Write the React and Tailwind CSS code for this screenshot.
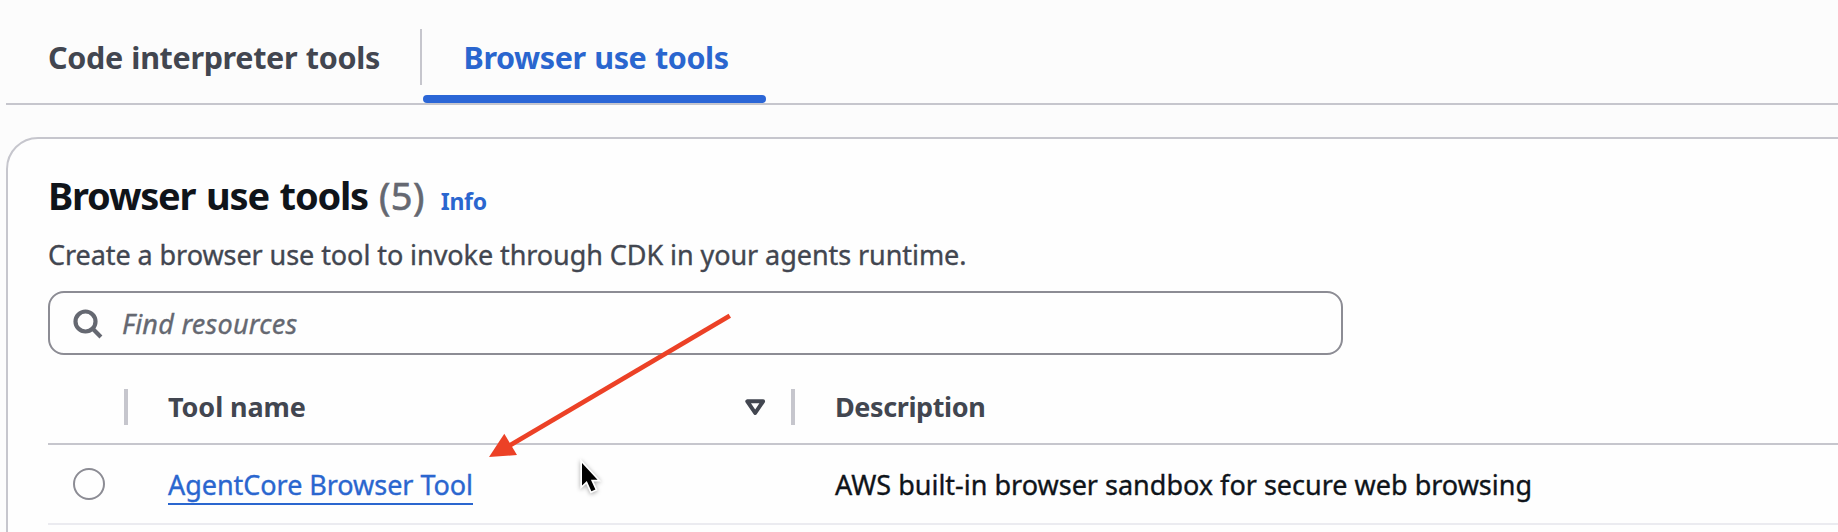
function SearchIcon() {
  return (
    <svg viewBox="0 0 30 30" className="mt-px h-[30px] w-[30px]" fill="none" stroke="#656871" strokeWidth="4.2">
      <circle cx="12.5" cy="12.5" r="10" />
      <path d="M19.5 19.5l8.4 8.4" />
    </svg>
  );
}

function SortIcon() {
  return (
    <svg viewBox="0 0 21 17" className="h-[17px] w-[21px]" fill="none" stroke="#424650" strokeWidth="4" strokeLinejoin="round">
      <path d="M2.3 2.3h15.8L10.2 14z" />
    </svg>
  );
}

function Annotations() {
  return (
    <svg viewBox="0 0 1838 532" className="pointer-events-none absolute left-0 top-0 h-[532px] w-[1838px]">
      <path d="M729.8 315.8L508 446.5" stroke="#ec4126" strokeWidth="4.8" />
      <path d="M489 457l15.3-23.2L517 455z" fill="#ec4126" />
      <g className="[filter:drop-shadow(0_1px_2px_rgba(0,0,0,0.35))]">
        <path d="M582 463v22.5l4.8-4.4 4.6 10.2 4-1.8-4.5-9.8h6.6z" fill="#000" stroke="#fff" strokeWidth="3.4" />
        <path d="M582 463v22.5l4.8-4.4 4.6 10.2 4-1.8-4.5-9.8h6.6z" fill="#000" />
      </g>
    </svg>
  );
}

export default function App() {
  return (
    <div className="relative h-[532px] w-[1838px] overflow-hidden bg-[#fcfcfc] pl-[6px] font-['Noto_Sans','Open_Sans',sans-serif] text-[27px] text-[#0f141a]">
      <nav className="flex h-[105px] border-b-2 border-[#c6c6cd] pt-[11px] text-[30.5px] font-bold">
        <div className="flex h-[92px] items-center whitespace-nowrap pl-[42px] text-[#424650]">
          <span className="w-[372px] pt-[2px] tracking-[-0.34px] [word-spacing:1px]">Code interpreter tools</span>
          <span className="h-14 w-[2px] bg-[#c6c6cd]" />
        </div>
        <div className="ml-px flex h-[92px] w-[343px] flex-col text-[#2a66cf]">
          <span className="flex h-[84px] items-center whitespace-nowrap pl-[40.5px] pt-[10px] tracking-[-0.4px] [word-spacing:1px]">Browser use tools</span>
          <span className="h-2 rounded bg-[#2b66d6]" />
        </div>
      </nav>

      <section className="mt-8 h-[440px] w-[1880px] rounded-tl-[32px] border-2 border-[#c6c6cd] bg-[#fefefe] pl-[40px] pt-[31px]">
        <header className="flex h-[50px] items-baseline whitespace-nowrap leading-[50px]">
          <h2 className="text-[38px] font-bold tracking-[-1.2px] [word-spacing:2px]">Browser use tools</h2>
          <span className="ml-[11px] text-[38px] tracking-[0.4px] text-[#656871] [-webkit-text-stroke:0.6px_#656871]">(5)</span>
          <a className="ml-[16px] text-[23px] font-bold tracking-[-0.3px] text-[#2a66cf]">Info</a>
        </header>
        <p className="mt-[17px] h-9 whitespace-nowrap leading-9 tracking-[-0.07px] text-[#424650] [-webkit-text-stroke:0.35px_#424650]">
          Create a browser use tool to invoke through CDK in your agents runtime.
        </p>
        <div className="mt-[18px] flex h-16 w-[1295px] items-center rounded-[16px] border-2 border-[#8c8c94] pl-[23px]">
          <SearchIcon />
          <span className="ml-[19px] pt-[2px] italic tracking-[0.25px] text-[#656871] [-webkit-text-stroke:0.35px_#656871]">Find resources</span>
        </div>

        <div className="flex h-[90px] items-center border-b-2 border-[#c6c6cd] pt-[16px] font-bold text-[#424650]">
          <span className="ml-[75.5px] h-9 w-1 bg-[#c6c6cd]" />
          <span className="ml-[40.5px] w-[577px] tracking-[-0.1px]">Tool name</span>
          <SortIcon />
          <span className="ml-[25px] h-9 w-1 bg-[#c6c6cd]" />
          <span className="ml-[40px] tracking-[-0.4px]">Description</span>
        </div>
        <div className="flex h-[80px] items-center whitespace-nowrap border-b-2 border-[#ebebf0]">
          <span className="ml-[25px] h-8 w-8 rounded-full border-2 border-[#8c8c94]" />
          <span className="ml-[63px] flex w-[667px]">
            <a className="mt-px h-[41px] border-b-2 border-[#2a66cf] leading-[42px] tracking-[-0.05px] text-[#2a66cf] [-webkit-text-stroke:0.35px_#2a66cf]">AgentCore Browser Tool</a>
          </span>
          <span className="pt-[2px] [-webkit-text-stroke:0.35px_#0f141a]">AWS built-in browser sandbox for secure web browsing</span>
        </div>
      </section>
      <Annotations />
    </div>
  );
}
